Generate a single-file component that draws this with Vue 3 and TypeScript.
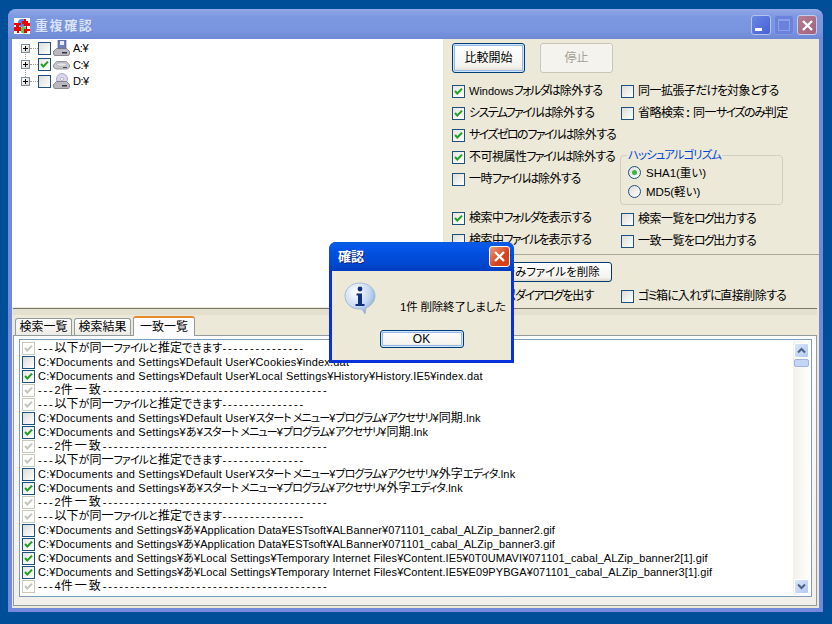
<script setup lang="ts">
type State = 'off' | 'on' | 'gray'
interface Row { s: State; t: string }

const segPattern = /(-{3,}|[ァ-ヶー]+(?: [ァ-ヶー]+)*|[\u4e00-\u9fff]+|[A-Za-z0-9]+|:)/
function segs(t: string) {
  return t.split(segPattern).filter(Boolean).map((s) => ({
    s,
    c: s[0] === '-' && s.length > 2 ? 'dash'
      : /^[ァ-ヶー]/.test(s) ? 'kana'
      : /^[\u4e00-\u9fff]/.test(s) ? 'kanji'
      : /^[A-Za-z0-9]/.test(s) ? 'lat'
      : s === ':' ? 'colon'
      : 'etc',
  }))
}

const drives = [
  { name: 'A:¥', on: false, kind: 'floppy' },
  { name: 'C:¥', on: true, kind: 'hdd' },
  { name: 'D:¥', on: false, kind: 'cd' },
]
const opt = (t: string, on = false) => ({ t, on, parts: segs(t) })
const leftTop = [
  opt('Windowsフォルダは除外する', true),
  opt('システムファイルは除外する', true),
  opt('サイズゼロのファイルは除外する', true),
  opt('不可視属性ファイルは除外する', true),
  opt('一時ファイルは除外する'),
]
const rightTop = [opt('同一拡張子だけを対象とする'), opt('省略検索:同一サイズのみ判定')]
const leftMid = [opt('検索中フォルダを表示する', true), opt('検索中ファイルを表示する')]
const rightMid = [opt('検索一覧をログ出力する'), opt('一致一覧をログ出力する')]
const lastRow = [opt('削除確認ダイアログを出す'), opt('ゴミ箱に入れずに直接削除する')]
const radios = [
  { t: 'SHA1(重い)', on: true },
  { t: 'MD5(軽い)', on: false },
]
const tabs = ['検索一覧', '検索結果', '一致一覧']

const head = '---以下が同一ファイルと推定できます---------------'
const two = '---2件一致' + '-'.repeat(41)
const four = '---4件一致' + '-'.repeat(41)
const base = 'C:¥Documents and Settings¥'
const source: Row[] = [
  { s: 'gray', t: head },
  { s: 'off', t: base + 'Default User¥Cookies¥index.dat' },
  { s: 'on', t: base + 'Default User¥Local Settings¥History¥History.IE5¥index.dat' },
  { s: 'gray', t: two },
  { s: 'gray', t: head },
  { s: 'off', t: base + 'Default User¥スタート メニュー¥プログラム¥アクセサリ¥同期.lnk' },
  { s: 'on', t: base + 'あ¥スタート メニュー¥プログラム¥アクセサリ¥同期.lnk' },
  { s: 'gray', t: two },
  { s: 'gray', t: head },
  { s: 'off', t: base + 'Default User¥スタート メニュー¥プログラム¥アクセサリ¥外字エディタ.lnk' },
  { s: 'on', t: base + 'あ¥スタート メニュー¥プログラム¥アクセサリ¥外字エディタ.lnk' },
  { s: 'gray', t: two },
  { s: 'gray', t: head },
  { s: 'off', t: base + 'あ¥Application Data¥ESTsoft¥ALBanner¥071101_cabal_ALZip_banner2.gif' },
  { s: 'on', t: base + 'あ¥Application Data¥ESTsoft¥ALBanner¥071101_cabal_ALZip_banner3.gif' },
  { s: 'on', t: base + 'あ¥Local Settings¥Temporary Internet Files¥Content.IE5¥0T0UMAVI¥071101_cabal_ALZip_banner2[1].gif' },
  { s: 'on', t: base + 'あ¥Local Settings¥Temporary Internet Files¥Content.IE5¥E09PYBGA¥071101_cabal_ALZip_banner3[1].gif' },
  { s: 'gray', t: four },
]
const rows = source.map((r) => ({
  ...r,
  long: r.t.includes('banner'),
  count: r.t.includes('件'),
  parts: segs(r.t),
}))
</script>

<template>
  <div class="desktop">
    <div class="window">
      <header class="titlebar">
        <svg class="appicon" width="16" height="16" viewBox="0 0 16 16">
          <rect width="16" height="16" fill="#fff" />
          <circle cx="8" cy="5" r="4" fill="#5a7fd8" />
          <circle cx="10" cy="12" r="3.5" fill="#58c858" />
          <path d="M0 5h7v2H5v2h2v4H5v2H3v-2H0V9h2V7H0zM8 3h2V1h2v2h2v2h2v3h-3v3h3v2h-3v2h-3v-4h2V8h-2V6H8z" fill="#f00000" />
        </svg>
        <span class="title">重複確認</span>
        <span class="capbtns">
          <span class="cap cap-min"><i></i></span>
          <span class="cap cap-max"><i></i></span>
          <span class="cap cap-close">
            <svg width="13" height="13" viewBox="0 0 13 13"><path d="M2 2l9 9M11 2l-9 9" stroke="#fff" stroke-width="2.4" /></svg>
          </span>
        </span>
      </header>

      <div class="client">
        <section class="top">
          <div class="tree">
            <div v-for="(d, i) in drives" :key="d.name" class="node" :class="{ first: i === 0 }">
              <span class="exp"><svg width="9" height="9" viewBox="0 0 9 9"><path d="M2 4.500h5M4.500 2v5" stroke="#000" /></svg></span>
              <span class="dots"></span>
              <span class="cb" :class="{ on: d.on }">
                <svg v-if="d.on" width="11" height="11" viewBox="0 0 11 11"><path d="M2 5l2.300 2.500L9 2.600" fill="none" stroke="#21a121" stroke-width="2" /></svg>
              </span>
              <svg class="drive" width="17" height="16" viewBox="0 0 17 16">
                <template v-if="d.kind === 'floppy'">
                  <rect x="5" y="0" width="8" height="10" fill="#6f7fb8" stroke="#44528a" stroke-width=".6" />
                  <rect x="7" y="1" width="4" height="4" fill="#e8ecf8" />
                </template>
                <template v-if="d.kind === 'cd'">
                  <circle cx="9" cy="6" r="5.500" fill="#d9d4ee" stroke="#8f8fb0" stroke-width=".7" />
                  <circle cx="9" cy="6" r="1.500" fill="#fff" stroke="#8080a0" stroke-width=".5" />
                </template>
                <template v-if="d.kind === 'hdd'">
                  <path d="M0.500 8l3-3.500h10l3 3.500v2l-2 2H2.500l-2-2z" fill="#c8c8cc" stroke="#77777f" stroke-width=".7" />
                  <ellipse cx="8.500" cy="7.500" rx="5" ry="1.800" fill="#e6e6ea" stroke="#8a8a92" stroke-width=".5" />
                  <rect x="10" y="10" width="4" height="1" fill="#4a4a52" />
                </template>
                <template v-else>
                  <path d="M0.500 11.500l3-3h10l3 3v2.500l-1 1.500H1.500l-1-1.500z" fill="#b8b8be" stroke="#66666e" stroke-width=".7" />
                  <rect x="9" y="12" width="5" height="1.500" fill="#33333b" />
                </template>
              </svg>
              <span class="nodetext">{{ d.name }}</span>
            </div>
          </div>

          <div class="panel">
            <div class="btnrow">
              <button class="xpbtn focused big">比較開始</button>
              <button class="xpbtn disabled big">停止</button>
            </div>
            <div class="options">
              <div class="col col-l">
                <label v-for="o in leftTop" :key="o.t" class="opt">
                  <span class="cb" :class="{ on: o.on }">
                    <svg v-if="o.on" width="11" height="11" viewBox="0 0 11 11"><path d="M2 5l2.300 2.500L9 2.600" fill="none" stroke="#21a121" stroke-width="2" /></svg>
                  </span>
                  <span class="otext"><span v-for="(p, k) in o.parts" :key="k" :class="p.c">{{ p.s }}</span></span>
                </label>
                <div class="gap17"></div>
                <label v-for="o in leftMid" :key="o.t" class="opt">
                  <span class="cb" :class="{ on: o.on }">
                    <svg v-if="o.on" width="11" height="11" viewBox="0 0 11 11"><path d="M2 5l2.300 2.500L9 2.600" fill="none" stroke="#21a121" stroke-width="2" /></svg>
                  </span>
                  <span class="otext"><span v-for="(p, k) in o.parts" :key="k" :class="p.c">{{ p.s }}</span></span>
                </label>
              </div>
              <div class="col">
                <label v-for="o in rightTop" :key="o.t" class="opt">
                  <span class="cb"></span>
                  <span class="otext"><span v-for="(p, k) in o.parts" :key="k" :class="p.c">{{ p.s }}</span></span>
                </label>
                <div class="group">
                  <span class="legend">ハッシュアルゴリズム</span>
                  <label v-for="r in radios" :key="r.t" class="radio">
                    <span class="rd" :class="{ on: r.on }"></span>{{ r.t }}
                  </label>
                </div>
                <label v-for="o in rightMid" :key="o.t" class="opt">
                  <span class="cb"></span>
                  <span class="otext"><span v-for="(p, k) in o.parts" :key="k" :class="p.c">{{ p.s }}</span></span>
                </label>
              </div>
            </div>
            <div class="sep"></div>
            <button class="xpbtn delbtn">チェック済みファイルを削除</button>
            <div class="delrow">
              <label v-for="o in lastRow" :key="o.t" class="opt optw">
                <span class="cb"></span>
                <span class="otext"><span v-for="(p, k) in o.parts" :key="k" :class="p.c">{{ p.s }}</span></span>
              </label>
            </div>
          </div>
        </section>

        <div class="splitter"></div>

        <section class="lower">
          <div class="tabs">
            <span v-for="(t, i) in tabs" :key="t" class="tab" :class="{ active: i === 2 }">{{ t }}</span>
          </div>
          <div class="tabbody">
            <div class="list">
              <div class="rows">
                <div v-for="(r, i) in rows" :key="i" class="row">
                  <span class="cb" :class="{ on: r.s === 'on', gray: r.s === 'gray' }">
                    <svg v-if="r.s !== 'off'" width="11" height="11" viewBox="0 0 11 11"><path d="M2 5l2.300 2.500L9 2.600" fill="none" :stroke="r.s === 'on' ? '#21a121' : '#c6c6bc'" stroke-width="2" /></svg>
                  </span>
                  <span class="rowtext" :class="{ long: r.long, count: r.count }"><span v-for="(p, k) in r.parts" :key="k" :class="p.c">{{ p.s }}</span></span>
                </div>
              </div>
              <div class="scroll">
                <span class="sbtn">
                  <svg width="9" height="7" viewBox="0 0 9 7"><path d="M1 5.500l3.500-3.500L8 5.500" fill="none" stroke="#4d6185" stroke-width="2" /></svg>
                </span>
                <span class="thumb"></span>
                <span class="track"></span>
                <span class="sbtn">
                  <svg width="9" height="7" viewBox="0 0 9 7"><path d="M1 1.500L4.500 5 8 1.500" fill="none" stroke="#4d6185" stroke-width="2" /></svg>
                </span>
              </div>
            </div>
          </div>
        </section>
      </div>
    </div>

    <div class="dialog">
      <header class="dlgtitle">
        <span class="dlgname">確認</span>
        <span class="dlgclose">
          <svg width="13" height="13" viewBox="0 0 13 13"><path d="M2 2l9 9M11 2l-9 9" stroke="#fff" stroke-width="2.4" /></svg>
        </span>
      </header>
      <div class="dlgbody">
        <div class="dlgmsg">
          <svg width="32" height="33" viewBox="0 0 32 33">
            <defs>
              <radialGradient id="bub" cx="35%" cy="30%" r="80%">
                <stop offset="0" stop-color="#ffffff" />
                <stop offset=".6" stop-color="#c4d8f2" />
                <stop offset="1" stop-color="#7fa0cc" />
              </radialGradient>
            </defs>
            <path d="M16 1C7 1 1 7 1 14s6 13 14 13h3l3 5 1-6c5-2 9-7 9-12C31 7 25 1 16 1z" fill="url(#bub)" stroke="#9db2cf" stroke-width=".8" />
            <circle cx="16" cy="7" r="2.400" fill="#12307f" />
            <path d="M12.500 11.500h5.500v10.500h2.500v2h-9v-2H14v-8.500h-1.500z" fill="#12307f" />
          </svg>
          <span class="msgtext">1件 削除終了しました</span>
        </div>
        <button class="xpbtn focused okbtn">OK</button>
      </div>
    </div>
  </div>
</template>

<style>
html, body { margin: 0; padding: 0; overflow: hidden; }
</style>

<style scoped>
.desktop {
  position: relative;
  width: 832px;
  height: 624px;
  box-sizing: border-box;
  padding: 9px 9px 12px 8px;
  background: #004e98;
  font-family: "Liberation Sans", "Noto Sans CJK JP", sans-serif;
  font-size: 12px;
  font-feature-settings: "palt";
  color: #000;
  line-height: 14px;
}
.window {
  height: 603px;
  display: flex;
  flex-direction: column;
  border-radius: 8px 8px 0 0;
  background: #7389db;
}
.titlebar {
  height: 30px;
  flex: none;
  display: flex;
  align-items: center;
  padding: 0 6px;
  border-radius: 8px 8px 0 0;
  background: linear-gradient(#94a9e6 0, #8aa1e4 3px, #7c98e0 8px, #7995e0 22px, #6f88d4 30px);
}
.appicon { margin: 4px 5px 0 0; }
.title {
  color: #d9e2f7;
  font-weight: 700;
  letter-spacing: 1.6px;
  font-size: 13px;
  margin-top: 4px;
  text-shadow: 1px 1px 0 #6e88d4;
}
.capbtns { margin-left: auto; display: flex; gap: 3px; margin-top: 2px; }
.cap {
  width: 20px;
  height: 20px;
  box-sizing: border-box;
  border: 1px solid #b4c2ec;
  border-radius: 3px;
  display: flex;
  align-items: center;
  justify-content: center;
}
.cap-min { background: linear-gradient(135deg, #6a86e4, #4661d6); }
.cap-min i { width: 7px; height: 3px; background: #fff; margin: 8px 5px 0 0; }
.cap-max { background: #6a82dc; border-color: #8299e2; }
.cap-max i { width: 10px; height: 9px; border: 1px solid #8ba0e6; border-top-width: 2px; }
.cap-close { background: linear-gradient(135deg, #b47e94, #a5607a); border-color: #c5cdea; }

.client {
  flex: 1;
  min-height: 0;
  margin: 0 4px 4px;
  background: #ece9d8;
  display: flex;
  flex-direction: column;
}
.top { height: 268px; flex: none; display: flex; }
.tree {
  width: 431px;
  flex: none;
  box-sizing: border-box;
  background: #fff;
  padding: 1px 0 0 9px;
  font-size: 11px;
  letter-spacing: -0.5px;
}
.node { height: 16.5px; display: flex; align-items: center; position: relative; }
.exp {
  width: 9px;
  height: 9px;
  box-sizing: border-box;
  border: 1px solid #7d8a97;
  background: linear-gradient(135deg, #fff, #d8d4c8);
  display: flex;
  align-items: center;
  justify-content: center;
  position: relative;
  z-index: 1;
}
.exp svg { flex: none; margin: -1px; }
.node:not(.first)::before {
  content: "";
  position: absolute;
  left: 4px;
  top: -5px;
  height: 9px;
  border-left: 1px dotted #999;
}
.dots { width: 8px; border-top: 1px dotted #999; }
.node .cb { margin-right: 2px; }
.drive { flex: none; margin-right: 3px; }

.cb {
  width: 13px;
  height: 13px;
  flex: none;
  box-sizing: border-box;
  border: 1px solid #1c5180;
  background: linear-gradient(135deg, #dcdcd7, #fff);
  display: inline-flex;
  align-items: center;
  justify-content: center;
}
.cb svg { flex: none; }
.cb.on { background: linear-gradient(135deg, #e6e6e0, #fff); }
.cb.gray { border-color: #cac8bb; background: #fff; }

.panel { flex: 1; min-width: 0; box-sizing: border-box; padding: 4px 2px 0 9px; }
.btnrow { display: flex; gap: 15px; }
.xpbtn {
  font: inherit;
  font-feature-settings: inherit;
  color: #000;
  box-sizing: border-box;
  padding: 0;
  border: 1px solid #003c74;
  border-radius: 3px;
  background: linear-gradient(#fff, #f4f3ee 80%, #dcd8cb);
}
.xpbtn.big { width: 73px; height: 30px; }
.xpbtn.focused { box-shadow: inset 0 0 0 1px #cee7ff, inset 0 0 0 2px #98b8ea; }
.xpbtn.disabled { color: #a4a294; border-color: #c9c7ba; background: #f4f3ee; }
.options { display: flex; margin-top: 7px; }
.col { display: flex; flex-direction: column; }
.col-l { width: 169px; flex: none; }
.opt {
  height: 22px;
  display: flex;
  align-items: center;
  gap: 4px;
  white-space: nowrap;
}
.otext .kana { letter-spacing: -1.6px; }
.otext .kanji { letter-spacing: -0.5px; }
.otext .etc { letter-spacing: -1.2px; }
.otext .lat { font-size: 11px; }
.otext .colon { padding: 0 3px 0 2px; font-weight: 700; }
.gap17 { height: 17px; }
.group {
  position: relative;
  width: 163px;
  height: 50px;
  box-sizing: border-box;
  margin: 31px 0 3px -1px;
  padding: 7px 0 0 7px;
  border: 1px solid #d0d0bf;
  border-radius: 4px;
}
.legend {
  position: absolute;
  top: -8px;
  left: 6px;
  padding: 0 1px;
  background: #ece9d8;
  color: #0046d5;
  white-space: nowrap;
  font-size: 11.5px;
  letter-spacing: -1px;
}
.radio { height: 19px; display: flex; align-items: center; gap: 5px; font-size: 11.5px; }
.rd {
  width: 13px;
  height: 13px;
  box-sizing: border-box;
  border-radius: 50%;
  border: 1px solid #1c5180;
  background: linear-gradient(135deg, #dcdcd7, #fff);
  position: relative;
}
.rd.on::after {
  content: "";
  position: absolute;
  left: 3px;
  top: 3px;
  width: 5px;
  height: 5px;
  border-radius: 50%;
  background: #3cb83c;
}
.sep { height: 1px; margin: 2px -2px 0 -9px; background: #aca899; }
.delbtn { display: block; width: 160px; height: 20px; margin-top: 7px; font-size: 11.5px; }
.delrow { display: flex; margin-top: 3px; }
.optw { width: 169px; flex: none; }

.splitter { height: 6px; margin: 1px 2px 0 1px; flex: none; background: #e4e0cf; border-top: 1px solid #7d7a6c; }
.lower { flex: 1; min-height: 0; display: flex; flex-direction: column; margin: 1px 2px 2px 1px; }
.tabs { height: 19px; flex: none; display: flex; align-items: flex-end; gap: 2px; padding-left: 2px; position: relative; z-index: 1; }
.tab {
  width: 57px;
  height: 17px;
  box-sizing: border-box;
  text-align: center;
  line-height: 16px;
  border: 1px solid #919b9c;
  border-bottom: none;
  border-radius: 3px 3px 0 0;
  background: linear-gradient(#fff, #ecebe6);
}
.tab.active {
  width: 62px;
  height: 20px;
  margin-bottom: -1px;
  line-height: 19px;
  background: #fcfcfe;
  border-top: 2px solid #e68b2c;
}
.tabbody {
  flex: 1;
  min-height: 0;
  box-sizing: border-box;
  padding: 3px 4px 8px 5px;
  border: 1px solid #919b9c;
  background: linear-gradient(#fcfcfe, #f1efe9);
  display: flex;
}
.list {
  flex: 1;
  min-width: 0;
  box-sizing: border-box;
  border: 1px solid #7f9db9;
  background: #fff;
  display: flex;
  padding: 1px 1px 1px 2px;
}
.rows { flex: 1; min-width: 0; overflow: hidden; font-size: 11px; }
.row { height: 14px; display: flex; align-items: center; gap: 3px; white-space: nowrap; }
.rowtext { letter-spacing: 0.18px; }
.rowtext.long { letter-spacing: 0.08px; }
.rowtext .kana { letter-spacing: -0.9px; }
.rowtext .kanji { font-size: 12px; letter-spacing: 0; }
.rowtext.count .kanji { letter-spacing: 2px; }
.rowtext .dash { letter-spacing: 1.84px; }
.scroll { width: 17px; flex: none; display: flex; flex-direction: column; background: linear-gradient(90deg, #f3f1ec, #fefefb); }
.sbtn {
  height: 15px;
  flex: none;
  margin: 1px;
  box-sizing: border-box;
  border: 1px solid #fff;
  border-radius: 2px;
  background: linear-gradient(135deg, #dbe6fb, #b3c8f5);
  display: flex;
  align-items: center;
  justify-content: center;
}
.scroll .sbtn:first-child { margin-top: 2px; }
.thumb { height: 8px; flex: none; margin: 0 1px; background: #c4d5f7; border: 1px solid #9db5df; border-radius: 2px; box-sizing: border-box; }
.track { flex: 1; }

.dialog {
  position: absolute;
  left: 329px;
  top: 242px;
  width: 185px;
  height: 121px;
  display: flex;
  flex-direction: column;
  box-sizing: border-box;
  border-radius: 7px 7px 0 0;
  background: #0831d9;
}
.dlgtitle {
  height: 29px;
  flex: none;
  display: flex;
  align-items: center;
  padding: 0 4px 0 9px;
  border-radius: 7px 7px 0 0;
  background: linear-gradient(#0a5bdc 0, #0758ec 4px, #0250e0 10px, #0148d0 22px, #003dc0 29px);
}
.dlgname { color: #fff; font-weight: 700; font-size: 13px; text-shadow: 1px 1px 0 #0f1f7a; }
.dlgclose {
  margin-left: auto;
  width: 21px;
  height: 21px;
  box-sizing: border-box;
  border: 1px solid #fff;
  border-radius: 3px;
  background: linear-gradient(135deg, #e89a7c, #d6431b 60%);
  display: flex;
  align-items: center;
  justify-content: center;
}
.dlgbody {
  flex: 1;
  min-height: 0;
  margin: 0 3px 3px;
  background: #ece9d8;
  display: flex;
  flex-direction: column;
  align-items: center;
  padding-top: 11px;
  box-sizing: border-box;
}
.dlgmsg { align-self: stretch; display: flex; align-items: flex-start; padding-left: 12px; height: 48px; }
.msgtext { margin: 18px 0 0 24px; white-space: nowrap; font-size: 11.5px; letter-spacing: -0.2px; }
.okbtn { width: 84px; height: 18px; font-size: 12px; line-height: 14px; }
</style>
